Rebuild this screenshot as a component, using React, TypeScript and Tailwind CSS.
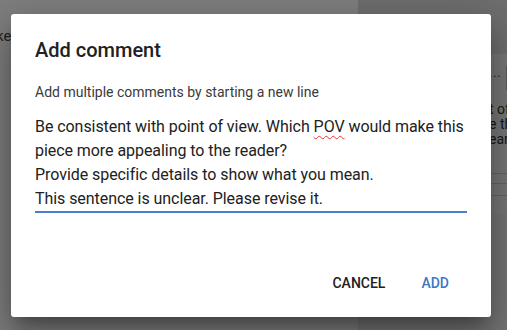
import React from 'react';

const font = { fontFamily: 'Roboto, "Noto Sans", sans-serif' };

function BackgroundPage() {
  return (
    <div className="flex h-[330px] w-[507px] overflow-hidden bg-white text-[#333]">
      {/* Left document pane */}
      <div className="w-[358px] pt-[26px]">
        <p className="-ml-[4px] text-[15px] leading-5 text-[#444]">ke</p>
      </div>

      {/* Right comments pane */}
      <div className="flex w-[149px] flex-col bg-[#ececec]">
        <div className="h-[54px] bg-[#dedede]" />
        <div className="flex h-[160px] flex-col bg-[#f2f2f2] pl-[131px] pt-[12px] text-[14px] leading-[15px] text-[#333]">
          <div className="flex h-[26px] items-start gap-[4px]">
            <span className="text-[12px] tracking-[1px]">...</span>
            <span className="ml-auto h-[24px] w-px bg-[#bbb]" />
          </div>
          <div className="mt-[10px] flex flex-col whitespace-nowrap">
            <span>t of</span>
            <span>e th</span>
            <span>ear</span>
          </div>
          <div className="mt-[26px] h-px bg-[#cfcfcf]" />
          <div className="mt-[9px] h-px bg-[#cfcfcf]" />
          <div className="mt-[11px] h-px bg-[#cfcfcf]" />
        </div>
      </div>
    </div>
  );
}

export default function App() {
  return (
    <div className="relative h-[330px] w-[507px] overflow-hidden" style={font}>
      <BackgroundPage />

      {/* Scrim */}
      <div className="absolute inset-0 bg-black/50" />

      {/* Add comment dialog */}
      <div className="absolute left-[11px] top-[14px] flex h-[303px] w-[480px] flex-col rounded-[3px] bg-white px-6 pt-[22px] shadow-[0_11px_15px_-7px_rgba(0,0,0,0.3),0_24px_38px_3px_rgba(0,0,0,0.2),0_9px_46px_8px_rgba(0,0,0,0.15)]">
        <h2 className="text-[20px] font-medium leading-[28px] text-[#212121]">Add comment</h2>
        <p className="mt-[18px] text-[14px] leading-5 text-[#3a3a3a]">
          Add multiple comments by starting a new line
        </p>

        <div className="mt-[13px] border-b-2 border-[#4a7fcb] text-[16px] leading-6 tracking-[-0.06px] text-[#212121]">
          <p>
            Be consistent with point of view. Which{' '}
            <span className="underline decoration-[#e53935] decoration-wavy decoration-1 underline-offset-[3px]">POV</span>{' '}
            would make this piece more appealing to the reader?
          </p>
          <p>Provide specific details to show what you mean.</p>
          <p>This sentence is unclear. Please revise it.</p>
        </div>

        <div className="mt-[60px] flex justify-end gap-4 pr-[8px]">
          <button className="px-[10px] text-[14px] font-medium uppercase leading-5 text-[#212121]">
            Cancel
          </button>
          <button className="px-[10px] text-[14px] font-medium uppercase leading-5 text-[#3b78c8]">
            Add
          </button>
        </div>
      </div>
    </div>
  );
}
